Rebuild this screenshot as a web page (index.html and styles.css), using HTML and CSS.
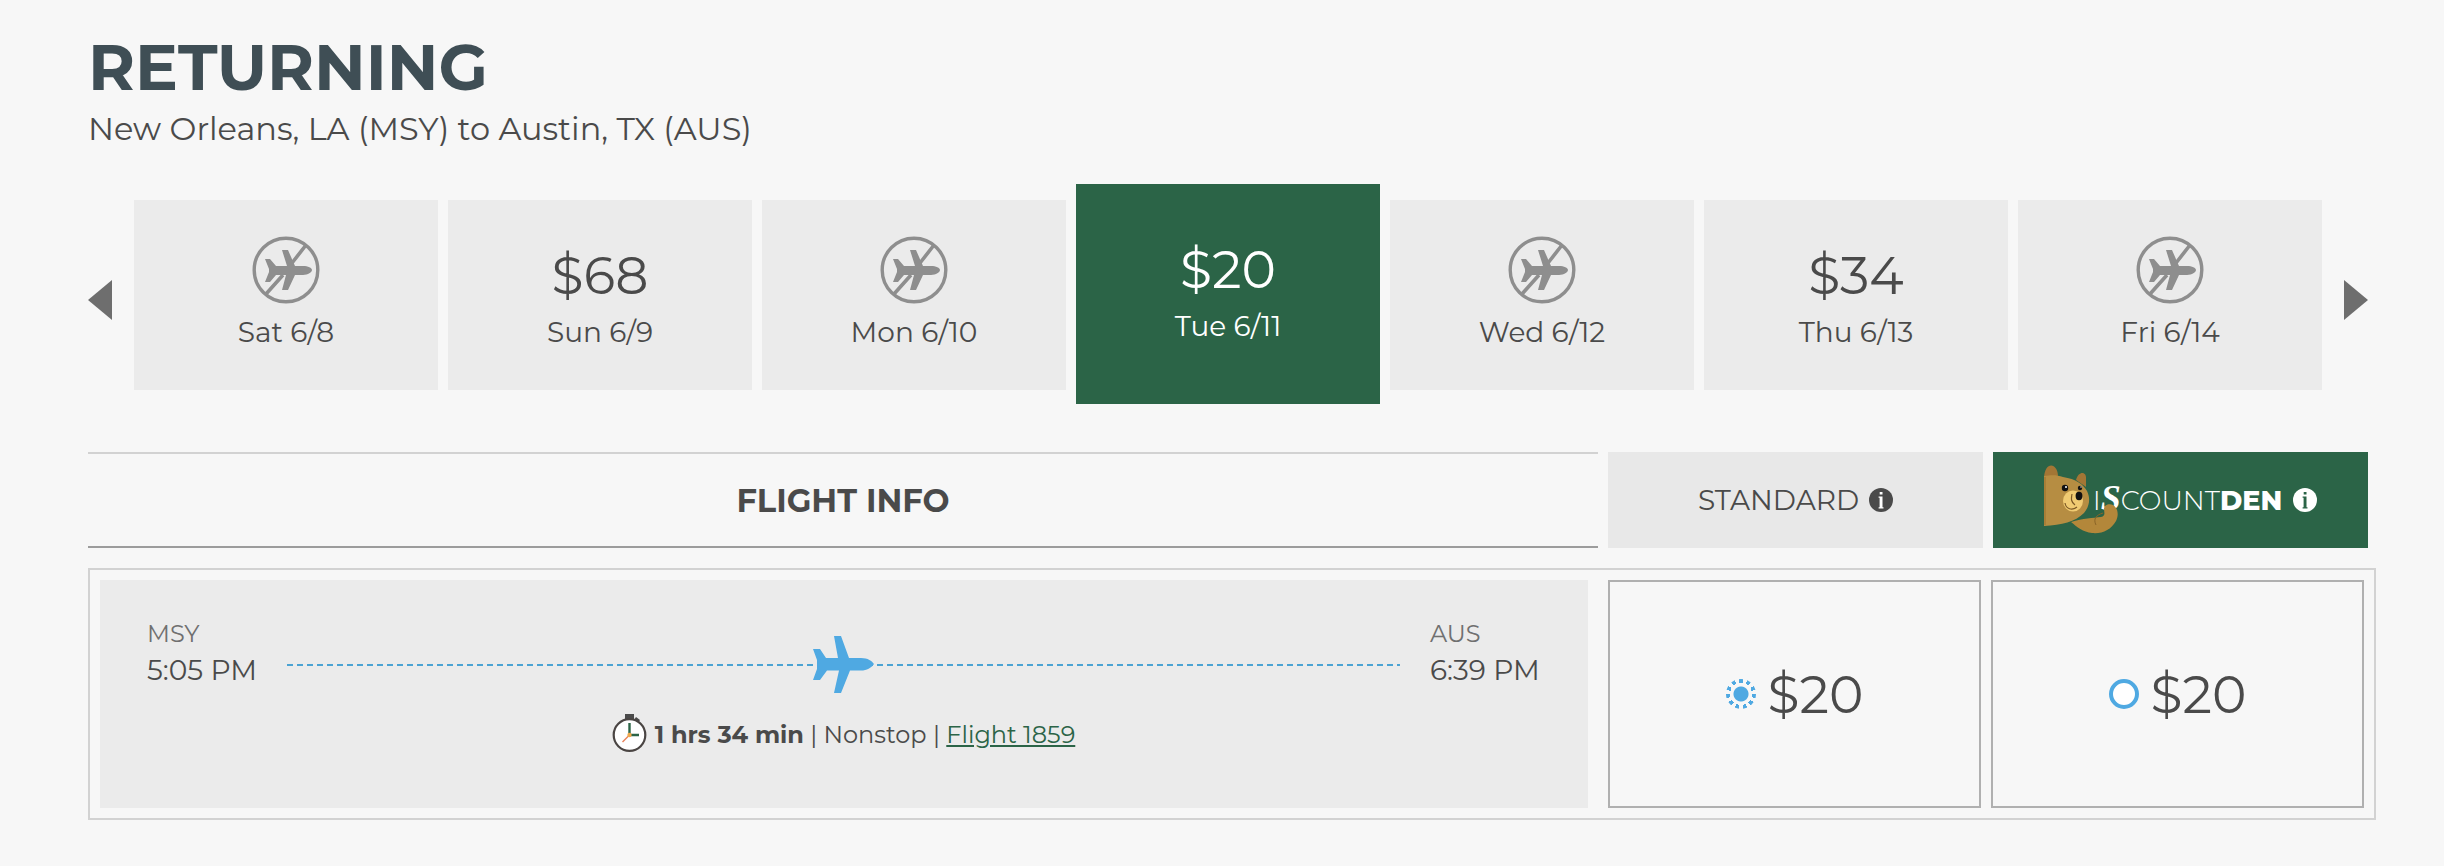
FILE: index.html
```html
<!DOCTYPE html>
<html lang="en">
<head>
  <meta charset="UTF-8" />
  <title>Returning Flights</title>
  <meta name="viewport" content="width=device-width, initial-scale=1.0" />
  <link rel="stylesheet" href="styles.css">
</head>
<body>
  <!-- shared icons -->
  <svg class="sprite" aria-hidden="true">
    <symbol id="no-flight" viewBox="0 0 68 68">
      <circle cx="34" cy="34" r="31.8" fill="none" stroke="currentColor" stroke-width="3.4" />
      <path d="M54 9L40 27M31 39L14 58" fill="none" stroke="currentColor" stroke-width="3.6" />
      <path d="M13 23h5l6 7h11L30 14h6l7 16h8c5 0 9 2 9 4s-4 5-9 5h-8l-7 15h-6l4-15H24l-6 7h-5l4-10v-3z" fill="currentColor" />
    </symbol>
    <symbol id="info" viewBox="0 0 24 24">
      <circle cx="12" cy="12" r="12" fill="currentColor" />
      <path class="info-mark" d="M10.7 4h2.8v2.6h-2.8zM9.6 8.6h3.9v10.6h1v1.2H9.6v-1.2h1V9.8h-1z" />
    </symbol>
  </svg>

  <main class="flights">
    <h1>RETURNING</h1>
    <p class="route-name">New Orleans, LA (MSY) to Austin, TX (AUS)</p>

    <!-- day picker -->
    <div class="days">
      <button type="button" class="arrow" aria-label="Previous days">
        <svg width="24" height="40" viewBox="0 0 24 40"><path d="M24 0v40L0 20z" fill="currentColor" /></svg>
      </button>
      <div class="day-list">
        <button type="button" class="day">
          <span class="day-fare"><svg class="no-flight"><use href="#no-flight" /></svg></span>
          <span class="day-date">Sat 6/8</span>
        </button>
        <button type="button" class="day">
          <span class="day-fare">$68</span>
          <span class="day-date">Sun 6/9</span>
        </button>
        <button type="button" class="day">
          <span class="day-fare"><svg class="no-flight"><use href="#no-flight" /></svg></span>
          <span class="day-date">Mon 6/10</span>
        </button>
        <button type="button" class="day active">
          <span class="day-fare">$20</span>
          <span class="day-date">Tue 6/11</span>
        </button>
        <button type="button" class="day">
          <span class="day-fare"><svg class="no-flight"><use href="#no-flight" /></svg></span>
          <span class="day-date">Wed 6/12</span>
        </button>
        <button type="button" class="day">
          <span class="day-fare">$34</span>
          <span class="day-date">Thu 6/13</span>
        </button>
        <button type="button" class="day">
          <span class="day-fare"><svg class="no-flight"><use href="#no-flight" /></svg></span>
          <span class="day-date">Fri 6/14</span>
        </button>
      </div>
      <button type="button" class="arrow" aria-label="Next days">
        <svg width="24" height="40" viewBox="0 0 24 40"><path d="M0 0v40l24-20z" fill="currentColor" /></svg>
      </button>
    </div>

    <!-- column headings -->
    <div class="heading-row">
      <h2 class="heading-info">FLIGHT INFO</h2>
      <div class="heading-standard">
        <span id="standard">STANDARD</span>
        <button type="button" class="info-btn" aria-label="About standard fares"><svg><use href="#info" /></svg></button>
      </div>
      <div class="heading-den">
        <svg class="bear" viewBox="0 0 75 70" aria-hidden="true">
          <!-- arm -->
          <path d="M27 57C39 53 49 53 57 52c5-1 3-5 3-8 0-4 5-6 9-4 5 3 6 10 3 16-5 9-14 13-24 12-9-1-15-6-21-11z" fill="#b3873a" />
          <path d="M52 60c-3-6 0-10 7-12" fill="none" stroke="#8a6427" stroke-width="1" />
          <!-- ears and head -->
          <path d="M0 14C0-4 14-3 14 12z" fill="#a37635" />
          <path d="M32 15c3-10 11-8 10-1v8z" fill="#a37635" />
          <path d="M0 11c8-1 13-1 19 1 13 2 20 7 24 14 4 8 2 16-3 22-9 9-22 12-40 13z" fill="#b68d42" />
          <path d="M1 12v48" fill="none" stroke="#9a712c" stroke-width="1" />
          <!-- muzzle -->
          <ellipse cx="29" cy="36" rx="10" ry="10.5" fill="#f0cb72" />
          <path d="M21 38c1 6 7 8 12 4M28 29c-1 5-1 8 3 11" fill="none" stroke="#7b5824" stroke-width="1.2" />
          <ellipse cx="35" cy="31" rx="3.4" ry="4.2" fill="#111" />
          <circle cx="21" cy="23" r="3.2" fill="#111" />
          <circle cx="36" cy="23" r="2.2" fill="#111" />
          <circle cx="22" cy="22" r="1" fill="#fff" />
          <circle cx="37" cy="22" r="0.7" fill="#fff" />
        </svg>
        <span class="den-name" id="den">I<i>S</i>COUNT<b>DEN</b></span>
        <button type="button" class="info-btn" aria-label="About Discount Den"><svg><use href="#info" /></svg></button>
      </div>
    </div>

    <!-- flight 1859 -->
    <form class="flight">
      <div class="flight-panel">
        <div class="route">
          <div class="stop">
            <div class="stop-code">MSY</div>
            <div class="stop-time">5:05 PM</div>
          </div>
          <div class="route-line">
            <svg class="plane" width="62" height="58" viewBox="0 0 62 58" aria-hidden="true">
              <path d="M0 13h7l6 9h12L21 0h7l8 22h12c7 0 11 3 13 6-3 4-7 6.500-13 6.500H37L28 57h-7l5-22.500H14L7 44H0l4-11v-9z" fill="#4fa9e2" />
            </svg>
          </div>
          <div class="stop">
            <div class="stop-code">AUS</div>
            <div class="stop-time">6:39 PM</div>
          </div>
        </div>
        <div class="details">
          <svg class="stopwatch" width="35" height="38" viewBox="0 0 35 38" aria-hidden="true">
            <path d="M13 0h9v6h-9zM24 3l4 3-2 3-4-3z" fill="#4a4a4a" />
            <circle cx="17.500" cy="21" r="15.800" fill="#fff" stroke="#4a4543" stroke-width="2.200" />
            <path d="M17.500 21l-7 7" stroke="#e8825a" stroke-width="1.500" />
            <path d="M17.500 21V9M17.500 21H27" fill="none" stroke="#2b6447" stroke-width="2.400" />
            <circle cx="17.500" cy="21" r="2.200" fill="#f0a94b" />
          </svg>
          <div><b>1 hrs 34 min</b> | Nonstop | <a href="#flight-1859">Flight 1859</a></div>
        </div>
      </div>
      <label class="fare">
        <input type="radio" name="fare" value="standard" aria-describedby="standard" checked />
        $20
      </label>
      <label class="fare">
        <input type="radio" name="fare" value="den" aria-describedby="den" />
        $20
      </label>
    </form>
  </main>
</body>
</html>
```
FILE: styles.css
```css
* {
  box-sizing: border-box;
}
body {
  margin: 0;
  font-family: 'Montserrat', 'Inter', sans-serif;
  color: #4a4a4a;
  background-color: #f7f7f7;
}
button {
  padding: 0;
  border: none;
  background: none;
  font: inherit;
  color: inherit;
  cursor: pointer;
}
svg {
  display: block;
}
.sprite {
  display: none;
}
.flights {
  padding: 35px 76px 46px 88px;
}
h1 {
  margin: 0;
  font-size: 64px;
  line-height: 64px;
  font-weight: 700;
  color: #3f4e55;
}
.route-name {
  margin: 10px 0 35px;
  font-size: 32px;
  line-height: 40px;
}

/* day picker */
.days {
  display: flex;
  align-items: flex-start;
  gap: 22px;
}
.arrow {
  flex: none;
  margin-top: 96px;
  color: #6e6e6e;
}
.day-list {
  flex: 1;
  display: grid;
  grid-template-columns: repeat(7, 1fr);
  align-items: flex-start;
  gap: 10px;
}
.day {
  display: flex;
  flex-direction: column;
  align-items: center;
  height: 190px;
  margin-top: 16px;
  padding-top: 36px;
  background-color: #ebebeb;
}
.day.active {
  height: 220px;
  margin-top: 0;
  padding-top: 46px;
  background-color: #2b6447;
  color: #fff;
}
.day-fare {
  display: flex;
  align-items: flex-end;
  height: 68px;
  font-size: 52px;
  line-height: 56px;
}
.day-date {
  margin-top: 10px;
  font-size: 28px;
  line-height: 36px;
}
.no-flight {
  width: 68px;
  height: 68px;
  color: #8e8e8e;
}

/* column headings */
.heading-row {
  display: grid;
  grid-template-columns: 1fr 375px 375px;
  gap: 10px;
  height: 96px;
  margin-top: 48px;
}
.heading-info,
.heading-standard,
.heading-den {
  display: flex;
  align-items: center;
  justify-content: center;
}
.heading-info {
  margin: 0;
  border-top: 2px solid #d2d2d2;
  border-bottom: 2px solid #9c9c9c;
  font-size: 32px;
}
.heading-standard {
  --mark: #fff;
  gap: 10px;
  background-color: #e8e8e8;
  font-size: 28px;
}
.heading-den {
  --mark: #2b6447;
  background-color: #2b6447;
  color: #fff;
  font-size: 27px;
}
.info-btn svg {
  width: 24px;
  height: 24px;
}
.info-mark {
  fill: var(--mark);
}
/* the bear's paw reaches over the S */
.bear {
  z-index: 1;
  width: 75px;
  height: 70px;
  margin-right: -26px;
}
.den-name {
  margin-right: 11px;
  font-weight: 300;
  line-height: 40px;
}
.den-name i {
  font-family: 'Liberation Serif', serif;
  font-size: 36px;
  font-weight: 700;
  line-height: 36px;
}
.den-name b {
  font-weight: 800;
}

/* flight */
.flight {
  display: grid;
  grid-template-columns: 1fr 373px 373px;
  gap: 10px;
  margin: 20px -8px 0 0;
  padding: 10px;
  border: 2px solid #d2d2d2;
}
.flight-panel {
  height: 228px;
  margin-right: 10px;
  padding: 38px 48px 0 47px;
  background-color: #ebebeb;
}
.route {
  display: flex;
  align-items: flex-start;
  gap: 30px;
}
.stop {
  flex: none;
  min-width: 110px;
}
.stop-code {
  font-size: 24px;
  line-height: 32px;
  color: #707070;
}
.stop-time {
  font-size: 28px;
  line-height: 40px;
}
.route-line {
  flex: 1;
  display: flex;
  justify-content: center;
  margin-top: 18px;
  background: repeating-linear-gradient(to right, #4ba3d3 0 6px, transparent 6px 10px) center / 100% 2px no-repeat;
}
.details {
  display: flex;
  align-items: flex-end;
  justify-content: center;
  gap: 8px;
  margin-top: 20px;
  font-size: 24px;
  line-height: 34px;
}
.details a {
  color: #2b6447;
}
.fare {
  display: flex;
  align-items: center;
  justify-content: center;
  gap: 12px;
  border: 2px solid #b0b0b0;
  font-size: 52px;
  cursor: pointer;
}
.fare input {
  appearance: none;
  width: 30px;
  height: 30px;
  margin: 0;
  border: 4px solid #4fa9e2;
  border-radius: 50%;
  background-color: #fff;
}
/* solid dot with a ring of eleven short dashes */
.fare input:checked {
  border: none;
  background:
    radial-gradient(circle, #4fa9e2 0 7px, #f7f7f7 8px 11px, transparent 11px),
    repeating-conic-gradient(from -8deg, #4fa9e2 0 16deg, #f7f7f7 16deg calc(360deg / 11));
}
```
